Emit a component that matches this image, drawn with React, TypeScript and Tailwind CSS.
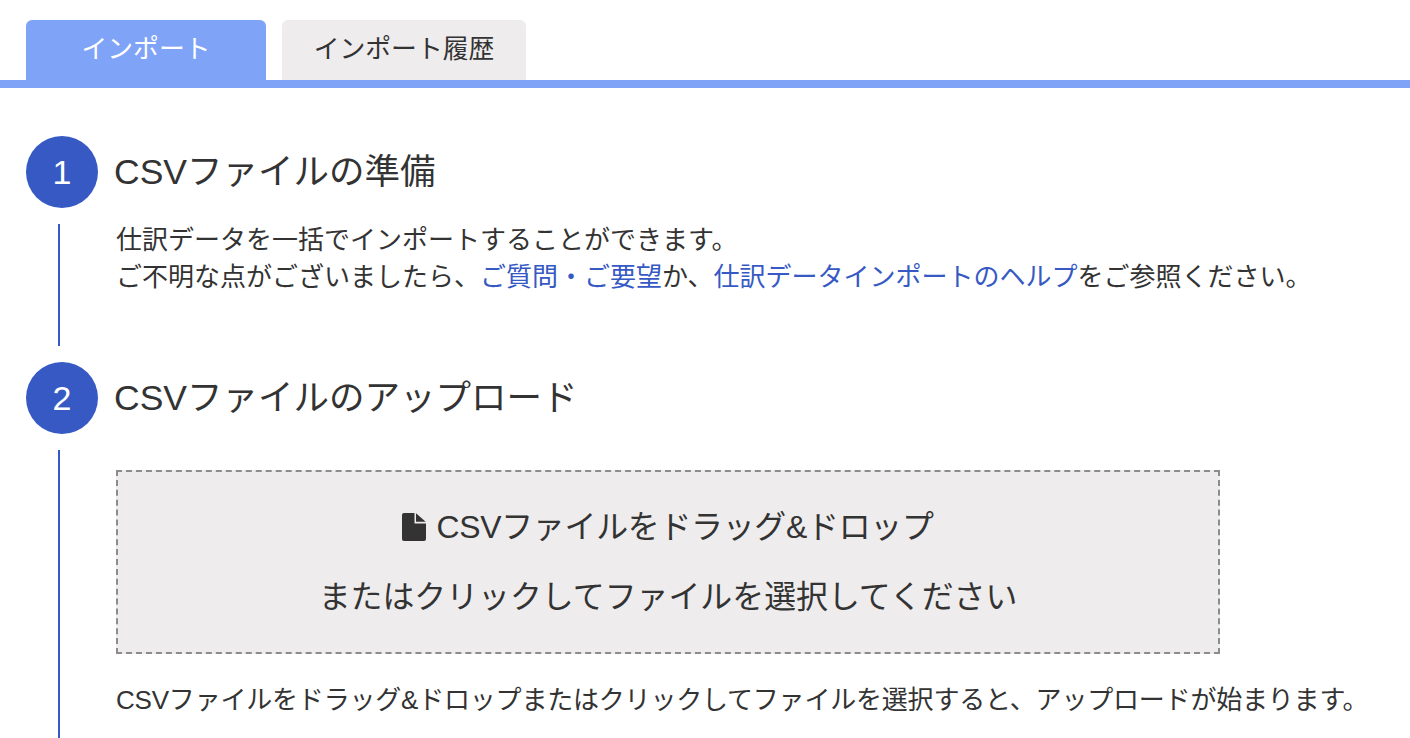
const font = "font-['Liberation_Sans','Noto_Sans_CJK_JP',sans-serif]"

function StepHeader({ num, title }: { num: number; title: string }) {
  return (
    <div className="flex items-center h-[72px]">
      <div className="flex items-center justify-center w-[72px] h-[72px] rounded-full bg-[#3659c4] text-white text-[34px]">
        {num}
      </div>
      <h2 className="ml-4 text-[35.5px] leading-[44px] font-normal text-[#333333]">{title}</h2>
    </div>
  )
}

function FileIcon() {
  return (
    <svg viewBox="0 0 24 28" className="w-6 h-7 text-[#333333]" fill="currentColor">
      <path d="M2 0h10.5v10.5H24V26a2 2 0 0 1-2 2H2a2 2 0 0 1-2-2V2a2 2 0 0 1 2-2z" />
      <path d="M14 0.3 23.7 8.7H14z" />
    </svg>
  )
}

export default function App() {
  return (
    <div className={`${font} h-[738px] overflow-hidden bg-white text-[#333333]`}>
      {/* Tabs */}
      <div className="flex gap-4 pt-5 pl-[26px] border-b-8 border-[#7fa3f7]">
        <div className="flex items-center justify-center w-[240px] h-[60px] pb-[2px] rounded-t-md bg-[#7fa3f7] text-white text-[25.8px]">
          インポート
        </div>
        <div className="flex items-center justify-center w-[244px] h-[60px] pb-[2px] rounded-t-md bg-[#eeeced] text-[25.8px]">
          インポート履歴
        </div>
      </div>

      <div className="pt-12 pl-[26px]">
        {/* Step 1 */}
        <StepHeader num={1} title="CSVファイルの準備" />
        <div className="flow-root mt-4 ml-8 h-[122px] border-l-2 border-[#3659c4] pl-14 text-[26px] leading-[37px]">
          <p className="-mt-[2px]">仕訳データを一括でインポートすることができます。</p>
          <p>
            ご不明な点がございましたら、
            <a className="text-[#3659c4]">ご質問・ご要望</a>
            か、
            <a className="text-[#3659c4]">仕訳データインポートのヘルプ</a>
            をご参照ください。
          </p>
        </div>

        {/* Step 2 */}
        <div className="mt-4">
          <StepHeader num={2} title="CSVファイルのアップロード" />
        </div>
        <div className="mt-4 ml-8 h-[288px] border-l-2 border-[#3659c4] pl-14 pt-5">
          <div className="flex flex-col items-center justify-center gap-[34px] w-[1104px] h-[184px] border-2 border-dashed border-[#8c8c8c] bg-[#eeeced] text-[31.9px] leading-[36px]">
            <div className="flex items-center gap-[10px]">
              <FileIcon />
              <span className="tracking-[-0.25px]">CSVファイルをドラッグ&ドロップ</span>
            </div>
            <div>またはクリックしてファイルを選択してください</div>
          </div>
          <p className="mt-[28px] text-[26px] leading-[37px] tracking-[-0.2px]">
            CSVファイルをドラッグ&ドロップまたはクリックしてファイルを選択すると、アップロードが始まります。
          </p>
        </div>
      </div>
    </div>
  )
}
